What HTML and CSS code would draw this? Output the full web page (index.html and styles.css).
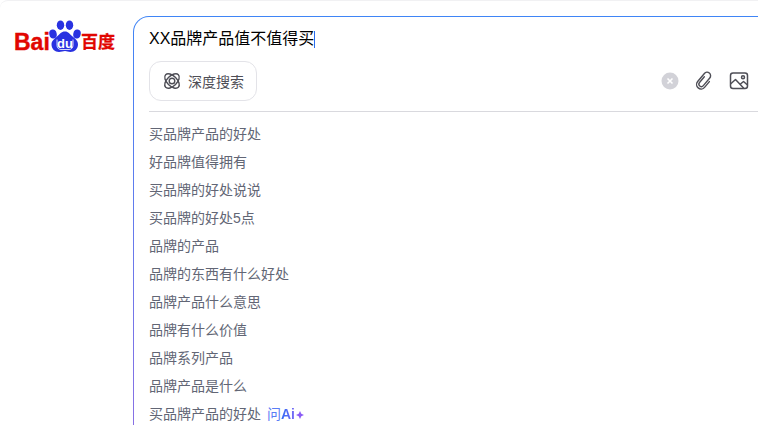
FILE: index.html
```html
<!DOCTYPE html>
<html lang="zh">
<head>
<meta charset="utf-8">
<title>百度</title>
<link rel="stylesheet" href="styles.css">
</head>
<body>
<div class="page">
  <div class="logo">
    <span class="logo-bai">Bai</span>
    <svg class="paw" width="32" height="33" viewBox="0 0 32 33">
      <ellipse cx="4" cy="15" rx="3.700" ry="4.500" fill="#2932e1" transform="rotate(-12 4 15)"/>
      <ellipse cx="11.500" cy="6.200" rx="3.700" ry="4.800" fill="#2932e1"/>
      <ellipse cx="20.500" cy="6.200" rx="3.700" ry="4.800" fill="#2932e1"/>
      <ellipse cx="28" cy="15" rx="3.700" ry="4.500" fill="#2932e1" transform="rotate(12 28 15)"/>
      <path d="M16 12.500c3.500 0 4.500 2.500 7 4.500 3 2.500 6 4.500 6 8.500 0 4.500-3.500 7.500-7.500 7.500-2.500 0-3.500-1-5.500-1s-3.500 1-6 1C6 33 2.500 30 2.500 25.500c0-4 3.500-6 6-8.500 2.500-2 3.500-4.500 7.500-4.500z" fill="#2932e1"/>
      <path d="M8 20.500v6c0 2.300 1.700 4 4 4h8c2.300 0 4-1.700 4-4v-6" fill="none" stroke="#fff" stroke-width="0.800"/>
      <text x="16" y="28.500" class="paw-text">du</text>
    </svg>
    <span class="logo-cn">百度</span>
  </div>
  <main class="box">
    <div class="input-line">XX品牌产品值不值得买<span class="caret"></span></div>
    <div class="tools">
      <button class="deep" type="button">
        <svg width="18" height="18" viewBox="0 0 18 18" fill="none" stroke="#4e4e56" stroke-width="1.400">
          <ellipse cx="9" cy="9" rx="9" ry="5" transform="rotate(45 9 9)"/>
          <ellipse cx="9" cy="9" rx="9" ry="5" transform="rotate(-45 9 9)"/>
          <circle cx="9" cy="9" r="2.800"/>
        </svg>
        <span>深度搜索</span>
      </button>
      <div class="actions">
        <span class="clear">
          <svg width="18" height="18" viewBox="0 0 18 18"><circle cx="9" cy="9" r="8.500" fill="#d2d2d8"/><path d="M6.500 6.500l5 5M11.500 6.500l-5 5" stroke="#fff" stroke-width="1.600"/></svg>
        </span>
        <svg width="20" height="20" viewBox="0 0 20 20" fill="none" stroke="#4e4e56" stroke-width="1.400" stroke-linecap="round">
          <path transform="rotate(40 10 10)" d="M7.500 6.500v7.500a2.500 2.500 0 0 0 5 0V4a3.500 3.500 0 0 0-7 0V14.500a4.500 4.500 0 0 0 9 0V7"/>
        </svg>
        <svg width="20" height="20" viewBox="0 0 20 20" fill="none" stroke="#4e4e56" stroke-width="1.500" stroke-linejoin="round">
          <rect x="1.500" y="2" width="17" height="15.500" rx="2.500"/>
          <path d="M1.500 13l5-4.500 8.500 9M11.500 13l3-2.500 4 3.500"/>
          <circle cx="14" cy="6.300" r="1.500"/>
        </svg>
      </div>
    </div>
    <ul class="suggestions">
      <li>买品牌产品的好处</li>
      <li>好品牌值得拥有</li>
      <li>买品牌的好处说说</li>
      <li>买品牌的好处5点</li>
      <li>品牌的产品</li>
      <li>品牌的东西有什么好处</li>
      <li>品牌产品什么意思</li>
      <li>品牌有什么价值</li>
      <li>品牌系列产品</li>
      <li>品牌产品是什么</li>
      <li class="ask-row">买品牌产品的好处 <span class="ask">问</span><b class="ai">Ai</b><svg class="spark" width="8" height="8" viewBox="0 0 8 8"><path d="M4 0l1.300 2.700 2.700 1.300-2.700 1.300-1.300 2.700-1.300-2.700-2.700-1.300 2.700-1.300z" fill="#8b5cf6"/></svg></li>
    </ul>
  </main>
</div>
</body>
</html>
```

FILE: styles.css
```css
* { box-sizing: border-box; }
html, body {
  margin: 0;
  height: 425px;
  overflow: hidden;
  background: #fff;
}
body {
  font-family: "Liberation Sans", "Noto Sans CJK SC", sans-serif;
}
.page {
  display: flex;
  align-items: flex-start;
  height: 425px;
  padding-top: 15px;
  border-top: 1px solid #f1f1f3;
  border-top-left-radius: 8px;
}
.logo {
  width: 133px;
  flex: none;
  display: flex;
  align-items: flex-start;
  padding: 3px 0 0 14px;
  color: #e10601;
}
.logo-bai {
  font: bold 23px/23px "Liberation Sans", sans-serif;
  width: 35px;
  margin-top: 12px;
  -webkit-text-stroke: 0.4px #e10601;
}
.paw { flex: none; }
.paw-text {
  font: bold 13px "Liberation Sans", sans-serif;
  fill: #fff;
  text-anchor: middle;
}
.logo-cn {
  font: bold 17px/17px "Noto Sans CJK SC", sans-serif;
  margin: 13px 0 0 0;
  white-space: nowrap;
  -webkit-text-stroke: 0.3px #e10601;
}
.box {
  flex: 1;
  height: 420px;
  border: 1px solid transparent;
  border-right: 0;
  border-bottom: 0;
  border-top-left-radius: 16px;
  padding: 11px 0 0 15px;
  background:
    linear-gradient(#fff, #fff) padding-box,
    linear-gradient(180deg, #3f85f6, #8a70e4) border-box;
}
.input-line {
  display: flex;
  align-items: center;
  font-size: 16px;
  line-height: 22px;
  color: #000;
  height: 22px;
}
.caret {
  width: 1px;
  height: 17px;
  background: #2a6cf0;
}
.tools {
  display: flex;
  justify-content: space-between;
  align-items: center;
  margin-top: 11px;
  padding-right: 9px;
  height: 40px;
}
.deep {
  display: flex;
  align-items: center;
  gap: 7px;
  width: 108px;
  height: 40px;
  padding: 0 0 0 13px;
  background: #fff;
  border: 1px solid #e3e3e8;
  border-radius: 12px;
  font: 14px "Liberation Sans", "Noto Sans CJK SC", sans-serif;
  color: #4e4e56;
}
.actions {
  display: flex;
  align-items: center;
  gap: 15px;
}
.clear { display: flex; }
.suggestions {
  list-style: none;
  margin: 10px 0 0 0;
  padding: 8px 0 0;
  border-top: 1px solid #d9d9de;
  font-size: 14px;
  line-height: 28px;
  color: #626675;
}
.suggestions li { height: 28px; white-space: nowrap; }
.ask { color: #5b7cf5; margin-left: 2px; }
.ai {
  font-weight: bold;
  background: linear-gradient(90deg, #2f6bf5, #7c6cf5);
  -webkit-background-clip: text;
  background-clip: text;
  color: transparent;
}
.spark { margin-left: 1px; }
```
